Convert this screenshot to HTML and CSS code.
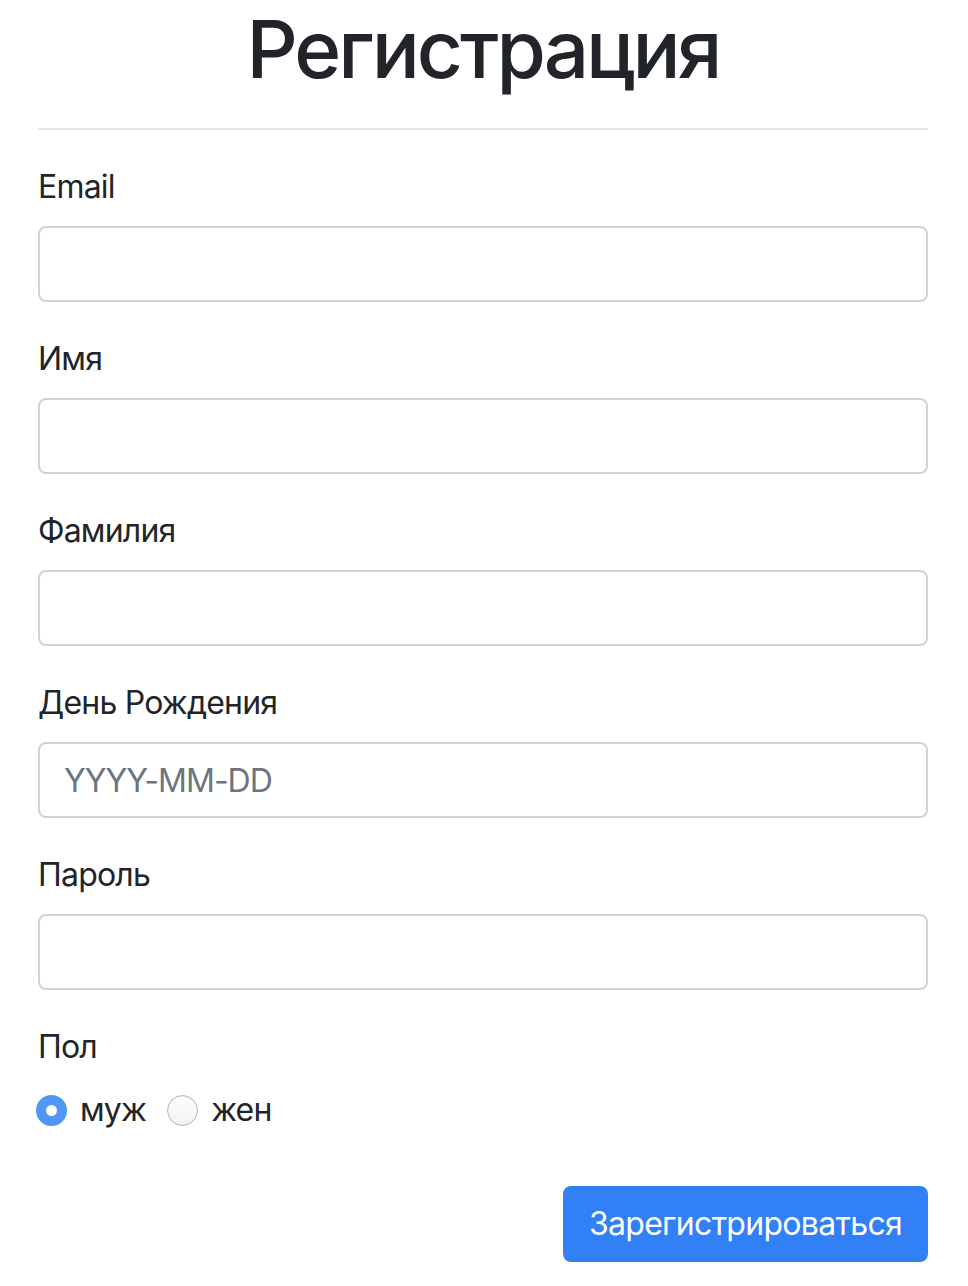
FILE: index.html
```html
<!DOCTYPE html>
<html lang="ru">
<head>
<meta charset="utf-8">
<title>Регистрация</title>
<link rel="stylesheet" href="styles.css">
</head>
<body>
<main class="container">
  <h1 class="title">Регистрация</h1>
  <hr class="divider">
  <form class="form">
    <div class="form-group">
      <label class="label" for="email">Email</label>
      <input class="input" id="email" type="text">
    </div>
    <div class="form-group">
      <label class="label" for="fname">Имя</label>
      <input class="input" id="fname" type="text">
    </div>
    <div class="form-group">
      <label class="label" for="lname">Фамилия</label>
      <input class="input" id="lname" type="text">
    </div>
    <div class="form-group">
      <label class="label" for="bday">День Рождения</label>
      <input class="input" id="bday" type="text" placeholder="YYYY-MM-DD">
    </div>
    <div class="form-group">
      <label class="label" for="pass">Пароль</label>
      <input class="input" id="pass" type="text">
    </div>
    <div class="form-group">
      <div class="label">Пол</div>
      <div class="radios">
        <label class="radio"><span class="radio-dot checked"></span><span class="radio-text">муж</span></label>
        <label class="radio"><span class="radio-dot"></span><span class="radio-text">жен</span></label>
      </div>
    </div>
    <div class="actions">
      <button class="btn" type="button">Зарегистрироваться</button>
    </div>
  </form>
</main>
</body>
</html>
```

FILE: styles.css
```css
html, body {
  margin: 0;
  padding: 0;
  background: #fff;
}
body {
  font-family: Inter, "Liberation Sans", sans-serif;
  color: #212529;
  letter-spacing: -0.8px;
}
.container {
  width: 890px;
  margin-left: 38px;
}
.title {
  margin: 0;
  font-size: 80px;
  line-height: 98px;
  font-weight: 500;
  text-align: center;
  letter-spacing: -3px;
}
.divider {
  margin: 30px 0 32px;
  border: 0;
  border-top: 2px solid #e6e6e6;
  height: 0;
}
.form-group {
  margin-bottom: 32px;
}
.label {
  display: block;
  font-size: 32px;
  line-height: 48px;
  margin-bottom: 16px;
  padding-top: 1px;
  height: 47px;
}
.input {
  display: block;
  box-sizing: border-box;
  width: 100%;
  height: 76px;
  padding: 12px 24px;
  font-family: inherit;
  font-size: 32px;
  letter-spacing: -1px;
  color: #495057;
  border: 2px solid #ced4da;
  border-radius: 8px;
  background: #fff;
  outline: none;
}
.input::placeholder {
  color: #6c757d;
}
.radios {
  display: flex;
  align-items: center;
  height: 48px;
}
.radio {
  display: flex;
  align-items: center;
  margin-right: 23px;
  font-size: 32px;
  line-height: 48px;
}
.radio-dot {
  box-sizing: border-box;
  width: 31px;
  height: 31px;
  margin-left: -2px;
  margin-right: 13px;
  border-radius: 50%;
  border: 1.5px solid #b4b4b4;
  background: linear-gradient(#fdfdfd, #f2f2f2);
  box-shadow: inset 0 1px 1px rgba(0,0,0,0.06);
}
.radio-dot.checked {
  border: 10px solid #4f96f5;
  background: #fff;
  box-shadow: none;
}
.actions {
  display: flex;
  justify-content: flex-end;
  margin-top: 52px;
}
.btn {
  font-family: inherit;
  font-size: 32px;
  line-height: 48px;
  letter-spacing: -0.7px;
  padding: 12px 24px;
  color: #fff;
  background: #3180f6;
  border: 2px solid #3180f6;
  border-radius: 8px;
}
```
